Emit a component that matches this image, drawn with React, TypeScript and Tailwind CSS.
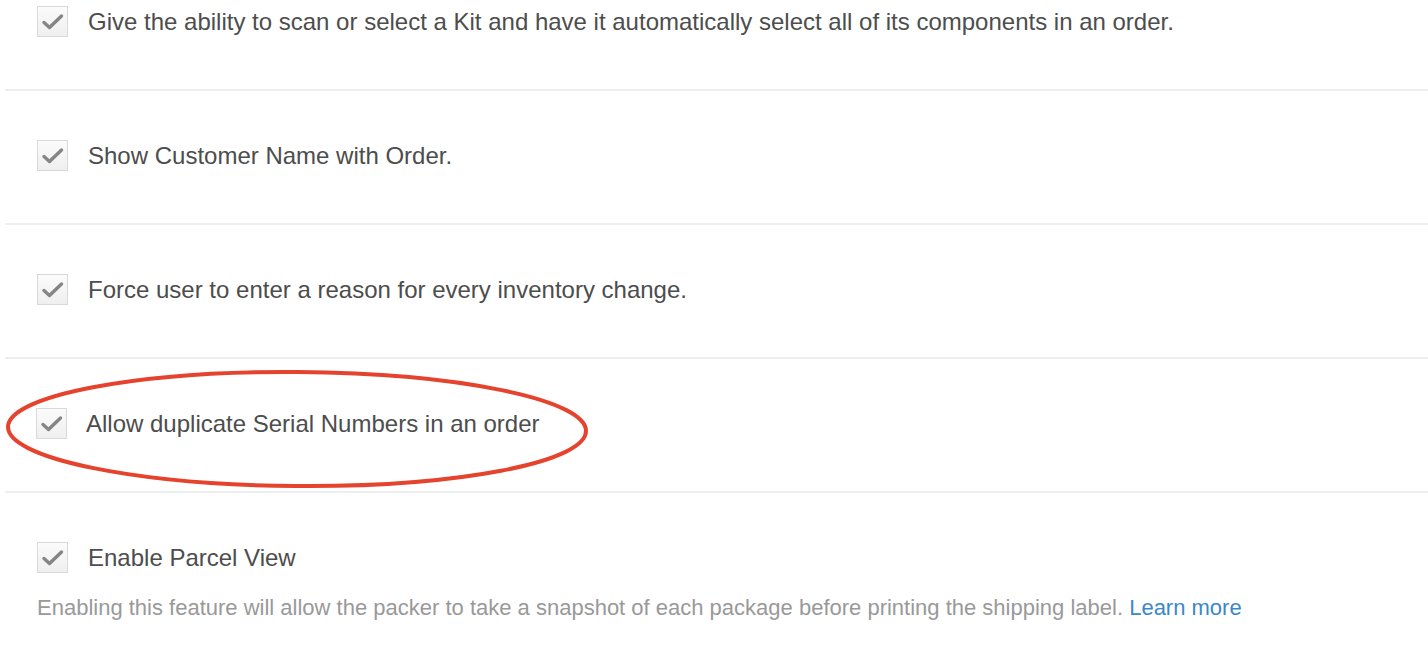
import React from 'react'

const OPTIONS = [
  { id: 'kit', label: 'Give the ability to scan or select a Kit and have it automatically select all of its components in an order.' },
  { id: 'customer', label: 'Show Customer Name with Order.' },
  { id: 'reason', label: 'Force user to enter a reason for every inventory change.' },
  { id: 'serial', label: 'Allow duplicate Serial Numbers in an order', circled: true },
]

function CheckBox() {
  return (
    <span className="w-[31px] h-[31px] shrink-0 border border-[#d9d9d9] bg-gradient-to-b from-[#fbfbfb] to-[#efefef] flex items-center justify-center">
      <svg width="24" height="20" viewBox="0 0 24 20" className="mt-[1px]">
        <path d="M3 10.5 L8.5 15.5 L20.5 4" fill="none" stroke="#858585" strokeWidth="3.4" strokeLinecap="round" strokeLinejoin="round" />
      </svg>
    </span>
  )
}

export default function App() {
  return (
    <div className="w-[1428px] h-[662px] bg-white overflow-hidden" style={{ fontFamily: '"Liberation Sans", Arial, Helvetica, sans-serif' }}>
      <div className="ml-[5px]">
        {OPTIONS.map((opt, i) => (
          <div
            key={opt.id}
            className={`relative border-b-2 border-[#eeeeee] pb-[52px] ${i === 0 ? 'pt-[6px]' : 'pt-[49px]'}`}
          >
            <div className={`flex items-center ${opt.circled ? 'pl-[31px] gap-[19px]' : 'pl-[32px] gap-[20px]'}`}>
              <CheckBox />
              <span className="text-[24px] leading-[28px] text-[#4d4d4d]">{opt.label}</span>
            </div>
            {opt.circled && (
              <svg className="absolute left-[0px] top-[10px] pointer-events-none" width="590" height="124" viewBox="0 0 590 124">
                <ellipse cx="292" cy="60" rx="289" ry="57" fill="none" stroke="#e5432d" strokeWidth="4" transform="rotate(0.4 292 60)" />
              </svg>
            )}
          </div>
        ))}

        {/* Parcel view */}
        <div className="pt-[49px]">
          <div className="flex items-center pl-[32px] gap-[20px]">
            <CheckBox />
            <span className="text-[24px] leading-[28px] text-[#4d4d4d]">Enable Parcel View</span>
          </div>
          <p className="pl-[32px] mt-[22px] text-[22px] leading-[26px] text-[#999999]">
            Enabling this feature will allow the packer to take a snapshot of each package before printing the shipping label.{' '}
            <a href="#" className="text-[#3b88c6]">Learn more</a>
          </p>
        </div>
      </div>
    </div>
  )
}
